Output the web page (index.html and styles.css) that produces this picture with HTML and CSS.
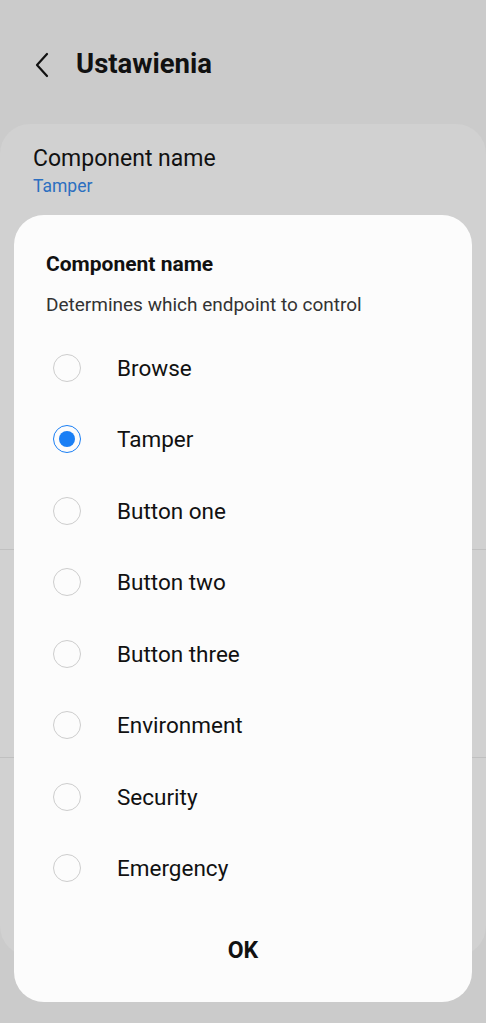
FILE: index.html
```html
<!DOCTYPE html>
<html lang="pl">
<head>
<meta charset="utf-8">
<title>Ustawienia</title>
<link rel="stylesheet" href="styles.css">
</head>
<body>
<div class="screen">
  <header class="appbar">
    <svg class="back" width="16" height="26" viewBox="0 0 16 26"><path d="M13 2 L3 13 L13 24" fill="none" stroke="#111" stroke-width="2.2" stroke-linecap="round" stroke-linejoin="round"/></svg>
    <h1 class="title">Ustawienia</h1>
  </header>
  <section class="card">
    <div class="pref">
      <div class="pref-title">Component name</div>
      <div class="pref-value">Tamper</div>
    </div>
    <div class="pref-gap1"></div>
    <div class="divider"></div>
    <div class="pref-gap2"></div>
    <div class="divider"></div>
  </section>

  <div class="dialog" role="dialog">
    <h2 class="dlg-title">Component name</h2>
    <p class="dlg-sub">Determines which endpoint to control</p>
    <ul class="options">
      <li class="opt"><span class="radio"></span><span class="label">Browse</span></li>
      <li class="opt"><span class="radio checked"></span><span class="label">Tamper</span></li>
      <li class="opt"><span class="radio"></span><span class="label">Button one</span></li>
      <li class="opt"><span class="radio"></span><span class="label">Button two</span></li>
      <li class="opt"><span class="radio"></span><span class="label">Button three</span></li>
      <li class="opt"><span class="radio"></span><span class="label">Environment</span></li>
      <li class="opt"><span class="radio"></span><span class="label">Security</span></li>
      <li class="opt"><span class="radio"></span><span class="label">Emergency</span></li>
    </ul>
    <div class="actions"><button class="ok">OK</button></div>
  </div>
</div>
</body>
</html>
```
FILE: styles.css
```css
html, body {
  margin: 0;
  padding: 0;
}
body {
  background: #cbcbcb;
  font-family: Roboto, "Noto Sans", "Liberation Sans", sans-serif;
  color: #111;
  width: 486px;
  height: 1023px;
  overflow: hidden;
}
.screen {
  position: relative;
  height: 1023px;
}
.appbar {
  height: 124px;
  display: flex;
  align-items: flex-start;
  padding-top: 49px;
  padding-left: 34px;
  box-sizing: border-box;
  gap: 26px;
}
.back {
  display: block;
  margin-top: 3px;
}
.title {
  margin: 0;
  font-size: 27.5px;
  font-weight: 700;
  line-height: 30px;
  color: #111;
}
.card {
  background: #d1d1d1;
  border-radius: 30px;
  height: 832px;
  box-sizing: border-box;
  padding-top: 20px;
}
.pref {
  padding-left: 33px;
}
.pref-title {
  font-size: 23px;
  line-height: 30px;
  color: #111;
}
.pref-value {
  font-size: 17.5px;
  line-height: 22px;
  color: #2c6fc0;
  margin-top: 1px;
}
.pref-gap1 { height: 352px; }
.pref-gap2 { height: 207px; }
.divider {
  height: 1px;
  background: #c0c0c0;
}
.dialog {
  position: absolute;
  left: 14px;
  top: 215px;
  width: 458px;
  height: 787px;
  background: #fcfcfc;
  border-radius: 30px;
  box-sizing: border-box;
  padding: 35px 0 0 0;
  display: flex;
  flex-direction: column;
}
.dlg-title {
  margin: 0 0 0 32px;
  font-size: 21px;
  font-weight: 700;
  line-height: 28px;
  color: #111;
}
.dlg-sub {
  margin: 14px 0 0 32px;
  font-size: 19px;
  line-height: 26px;
  color: #333;
}
.options {
  list-style: none;
  margin: 14px 0 0 0;
  padding: 0;
}
.opt {
  height: 71.5px;
  display: flex;
  align-items: center;
  padding-left: 39px;
}
.radio {
  width: 28px;
  height: 28px;
  box-sizing: border-box;
  border: 1.5px solid #cdcdcd;
  border-radius: 50%;
  flex: none;
  position: relative;
}
.radio.checked {
  border-color: #1a7ff5;
}
.radio.checked::after {
  content: "";
  position: absolute;
  left: 50%;
  top: 50%;
  width: 16px;
  height: 16px;
  margin: -8px 0 0 -8px;
  border-radius: 50%;
  background: #1a7ff5;
}
.label {
  margin-left: 36px;
  font-size: 22.5px;
  color: #111;
}
.actions {
  display: flex;
  justify-content: center;
  margin-top: 27px;
}
.ok {
  border: 0;
  background: transparent;
  font-family: inherit;
  font-size: 23px;
  font-weight: 700;
  color: #111;
  padding: 6px 20px;
}
```
